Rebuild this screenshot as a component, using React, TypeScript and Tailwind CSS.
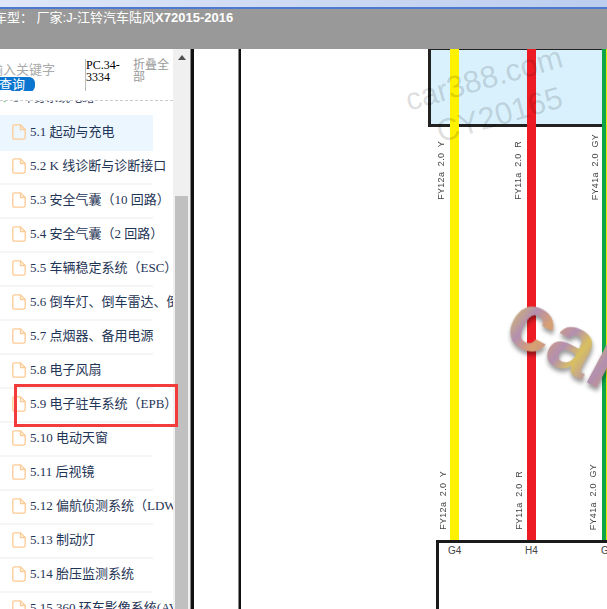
const sections = [
  "5.1 起动与充电",
  "5.2 K 线诊断与诊断接口",
  "5.3 安全气囊（10 回路）",
  "5.4 安全气囊（2 回路）",
  "5.5 车辆稳定系统（ESC）",
  "5.6 倒车灯、倒车雷达、倒车影像",
  "5.7 点烟器、备用电源",
  "5.8 电子风扇",
  "5.9 电子驻车系统（EPB）",
  "5.10 电动天窗",
  "5.11 后视镜",
  "5.12 偏航侦测系统（LDWS）",
  "5.13 制动灯",
  "5.14 胎压监测系统",
  "5.15 360 环车影像系统(AVM)",
];

function DocIcon() {
  return (
    <svg viewBox="0 0 14 16" className="h-[16px] w-[14px] shrink-0" fill="none" stroke="#fdcb94" strokeWidth="1.3">
      <path d="M2.5 .8H8.5L13.2 5.5V13.5Q13.2 15.2 11.5 15.2H2.5Q.8 15.2 .8 13.5V2.5Q.8 .8 2.5 .8Z" />
      <path d="M8.5 .8V5.5H13.2" />
    </svg>
  );
}

function WireLabel({ text, className }: { text: string; className: string }) {
  return (
    <span
      className={`absolute rotate-180 whitespace-pre text-[9px] leading-[10px] tracking-[0.3px] text-[#444] [writing-mode:vertical-rl] ${className}`}
    >
      {text}
    </span>
  );
}

export default function App() {
  return (
    <div className="flex h-[609px] w-[607px] flex-col overflow-hidden bg-white font-['Liberation_Sans','Noto_Sans_CJK_SC',sans-serif]">
      <div className="h-[7px] shrink-0 bg-gradient-to-r from-[#dfe7f8] to-[#bccdee]" />
      <div className="h-[2px] shrink-0 bg-[#4f79cf]" />
      <div className="h-[40px] shrink-0 overflow-hidden whitespace-pre bg-[#999999] text-[13px] leading-[17px] text-white">
        <span className="-ml-[6px] inline-block">车型： 厂家:J-江铃汽车陆风<b className="font-semibold">X72015-2016</b></span>
      </div>

      <div className="relative flex min-h-0 flex-1">
        <aside className="w-[173px] shrink-0 overflow-hidden font-['Liberation_Serif','Noto_Sans_CJK_SC',serif]">
          <div className="flex h-[52px] items-start border-b border-dashed border-[#cccccc] pt-[10px]">
            <div className="h-[32px] w-[86px] shrink-0 overflow-hidden border-r border-[#bbbbbb] pt-[4px]">
              <p className="-ml-[10px] whitespace-nowrap text-[13px] leading-[14px] text-[#aaaaaa]">输入关键字</p>
              <p className="h-[15px] w-[35px] rounded-r-[6px] bg-[#0b75cf] text-[13px] leading-[15px] text-white">
                <span className="-ml-[1px]">查询</span>
              </p>
            </div>
            <p className="w-[47px] shrink-0 text-[12px] leading-[12px] text-black">PC.34-3334</p>
            <p className="w-[38px] text-[12px] leading-[12px] text-[#999999]">折叠全部</p>
          </div>
          <div className="h-[14px] overflow-hidden whitespace-nowrap pl-[2px] text-[12px] leading-[14px] text-[#334466]">
            <div className="-mt-[10px]">
              <span className="text-[#5cb85c]">✓</span> 5 车身系统电路
            </div>
          </div>
          <ul>
            {sections.map((label, i) => (
              <li
                key={label}
                className={`flex h-[36px] w-[153px] items-center gap-[4px] whitespace-nowrap border-b-2 pl-[12px] text-[13px] text-[#1f3556] ${
                  i === 0 ? "border-transparent bg-[#ecf6fe]" : "-mt-[2px] border-[#f5f5f5]"
                }`}
              >
                <DocIcon />
                <span>{label}</span>
              </li>
            ))}
          </ul>
        </aside>

        <div className="flex w-[17px] shrink-0 flex-col bg-[#f0f0f0]">
          <div className="flex h-[17px] items-center justify-center">
            <svg viewBox="0 0 8 5" className="h-[5px] w-[8px]" fill="#505050"><path d="M4 0 8 5H0Z" /></svg>
          </div>
          <div className="ml-[2px] mt-[130px] w-[13px] flex-1 bg-[#c0c0c0]" />
        </div>
        <div className="w-[1px] shrink-0 bg-[#888]" />
        <div className="w-[3px] shrink-0 bg-[#111]" />

        <main className="relative min-w-0 flex-1 overflow-hidden bg-white">
          <div className="absolute left-[44px] top-0 h-full w-[3px] border-l border-[#888] bg-[#111]" />
          <div className="absolute left-[234px] -top-[2px] h-[80px] w-[300px] border-[3px] border-[#222] bg-[#d8f1fc]" />

          <div className="absolute left-[256px] top-0 h-[491px] w-[9px] bg-[#fff200]" />
          <div className="absolute left-[333px] top-0 h-[491px] w-[9px] bg-[#ed1c24]" />
          <div className="absolute left-[408px] top-0 h-[491px] w-[4px] bg-[#0fa64b]" />
          <div className="absolute left-[412px] top-0 h-[491px] w-[1px] bg-[#e8e800]" />

          <WireLabel text="FY12a  2.0  Y" className="bottom-[409px] left-[242px]" />
          <WireLabel text="FY11a  2.0  R" className="bottom-[409px] left-[319px]" />
          <WireLabel text="FY41a  2.0  GY" className="bottom-[409px] left-[396px]" />
          <WireLabel text="FY12a  2.0  Y" className="bottom-[79px] left-[244px]" />
          <WireLabel text="FY11a  2.0  R" className="bottom-[79px] left-[320px]" />
          <WireLabel text="FY41a  2.0  GY" className="bottom-[79px] left-[394px]" />

          <div className="absolute left-[242px] top-[491px] h-[80px] w-[300px] border-[3px] border-b-0 border-[#1a1a1a] bg-white" />
          <span className="absolute left-[254px] top-[497px] text-[10px] leading-[10px] text-[#444]">G4</span>
          <span className="absolute left-[331px] top-[497px] text-[10px] leading-[10px] text-[#444]">H4</span>
          <span className="absolute left-[407px] top-[497px] text-[10px] leading-[10px] text-[#444]">G</span>

          <div className="absolute left-[209px] top-[14px] -rotate-[16deg] whitespace-nowrap text-[31px] leading-[32px] text-[#00000026]">car388.com</div>
          <div className="absolute left-[241px] top-[50px] -rotate-[16deg] whitespace-nowrap text-[31px] leading-[32px] text-[#00000026]">CY20165</div>
          <div className="absolute left-[313px] top-[248px] rotate-[28deg] whitespace-nowrap bg-[linear-gradient(100deg,#d9c060_0%,#b28fb0_18%,#d8a070_32%,#b28fb0_50%,#d9c060_62%,#b28fb0_80%,#c99a70_100%)] bg-clip-text text-[82px] font-bold leading-[88px] text-transparent [filter:drop-shadow(2px_3px_2px_#0006)]">
            car
          </div>
        </main>

        <div className="absolute left-[14px] top-[335px] h-[43px] w-[164px] border-[3px] border-[#f23b3b]" />
      </div>
    </div>
  );
}
